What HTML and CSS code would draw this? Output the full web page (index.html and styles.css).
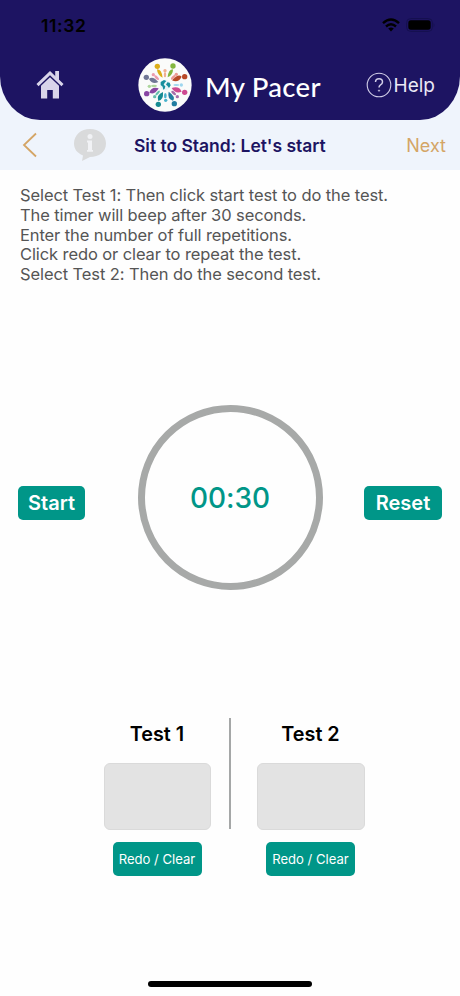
FILE: index.html
```html
<!DOCTYPE html>
<html lang="en">
<head>
<meta charset="utf-8">
<title>My Pacer</title>
<link rel="stylesheet" href="styles.css">
</head>
<body>
<div class="top">
  <header class="header">
    <div class="status">
      <span class="clock">11:32</span>
      <span class="indicators">
        <svg class="wifi" width="18" height="14" viewBox="0 0 18 14"><g fill="none" stroke="#000" stroke-width="2.4"><path d="M1 5.2Q9-2.2 17 5.2"/><path d="M4 8.5Q9 4 14 8.5"/></g><path d="M6.2 10.6Q9 8.4 11.8 10.6L9 13.5Z"/></svg>
        <svg class="battery" width="29" height="14" viewBox="0 0 29 14"><rect x=".6" y=".6" width="25.8" height="12.8" rx="4" fill="none" stroke="#15104f"/><rect x="2.3" y="2.3" width="22.4" height="9.4" rx="2.6"/><path d="M27.6 4.7q1.6 2.3 0 4.6z" fill="#15104f"/></svg>
      </span>
    </div>
    <div class="brandbar">
      <svg class="home" width="28" height="29" viewBox="0 0 28 29"><path d="M1.5 15.2L14 3.2L26.5 15.2" fill="none" stroke="#d9d5ea" stroke-width="3"/><path d="M19.2 1H23V12L19.2 8.4Z" fill="#d9d5ea"/><path d="M5 15.7L14 7.3L23 15.7V28.6H16.8V20H11.2V28.6H5Z" fill="#d9d5ea"/></svg>
      <svg class="logo" width="54" height="54" viewBox="-81 -81 162 162">
        <circle r="80" fill="#fafbfa"/>
        <g fill="#dcae18"><circle cx="-23" cy="-56" r="8"/><path d="M-24-47Q-10-47-7-22Q-23-29-24-47Z"/></g>
        <g fill="#83b63f"><circle cx="24" cy="-57" r="8"/><path d="M24-47Q10-47 8-23Q24-29 24-47Z"/></g>
        <g fill="#b84927"><circle cx="59" cy="-25" r="8"/><path d="M50-25Q40-36 21-14Q40-5 50-25Z"/></g>
        <g fill="#ce4a91"><circle cx="59" cy="22" r="8"/><path d="M50 20Q43 2 20 9Q31 28 50 20Z"/></g>
        <g fill="#217da0"><circle cx="28" cy="56" r="8"/><path d="M24 47Q33 35 11 20Q6 42 24 47Z"/></g>
        <g fill="#168b92"><circle cx="-20" cy="58" r="8"/><path d="M-20 48Q-4 45-6 21Q-27 30-20 48Z"/></g>
        <g fill="#8947a3"><circle cx="-55" cy="26" r="8"/><path d="M-47 23Q-41 4-19 10Q-30 31-47 23Z"/></g>
        <g fill="#707795"><circle cx="-56" cy="-23" r="8"/><path d="M-48-18Q-37-29-20-9Q-38 0-48-18Z"/></g>
        <g fill="#ec9cae"><circle cx="-35" cy="-31" r="5"/><ellipse cx="-25" cy="-22" rx="9" ry="4" transform="rotate(43 -25 -22)"/></g>
        <g fill="#f0af91"><circle cy="-43" r="5"/><ellipse cy="-31" rx="3.5" ry="8"/></g>
        <g fill="#ec9993"><circle cx="34" cy="-32" r="5"/><ellipse cx="25" cy="-23" rx="9" ry="4" transform="rotate(-43 25 -23)"/></g>
        <g fill="#9ed6ef"><circle cx="49" r="5"/><ellipse cx="34" rx="9" ry="3"/></g>
        <g fill="#a56da9"><circle cx="37" cy="35" r="5"/><ellipse cx="26" cy="24" rx="9" ry="4" transform="rotate(43 26 24)"/></g>
        <g fill="#48b2cc"><circle cx="2" cy="46" r="5"/><ellipse cx="1" cy="32" rx="4" ry="8"/></g>
        <g fill="#65bdab"><circle cx="-31" cy="35" r="5"/><ellipse cx="-22" cy="24" rx="9" ry="3.5" transform="rotate(-47 -22 24)"/></g>
        <g fill="#add69d"><circle cx="-47" cy="4" r="5"/><ellipse cx="-33" cy="3" rx="9" ry="3.5"/></g>
        <circle r="16" fill="#e7f5f8"/>
        <path d="M-13-9L-3-15L4-12L-1-7L-4-1L1 4L-1 11L-5 14L-7 5L-13 0ZM7-8L14-7L17 1L12 9L7 2L3-1Z" fill="#168f9e"/>
      </svg>
      <span class="brand">My Pacer</span>
      <span class="help"><svg width="26" height="26" viewBox="0 0 26 26" fill="none" stroke="#d1cee7"><circle cx="13" cy="13" r="11.8" stroke-width="1.1"/><path d="M9.5 10Q9.6 6.8 13 6.8Q16.6 6.8 16.5 9.9Q16.5 11.5 14.5 12.8Q13 13.8 13 15.6" stroke-width="1.5"/><circle cx="13" cy="18.6" r=".7" fill="#d1cee7" stroke-width=".6"/></svg><span>Help</span></span>
    </div>
  </header>
  <nav class="nav">
    <svg class="back" width="16" height="26" viewBox="0 0 16 26"><path d="M14 1.5L2 13L14 24.5" fill="none" stroke="#d4a566" stroke-width="1.8"/></svg>
    <svg class="info" width="34" height="34" viewBox="0 0 34 34"><path d="M17 1C26 1 33 7 33 15.5S26 29 17 29L9 33L10 27.5C4 25 1 21 1 15.5C1 7 8 1 17 1Z" fill="#d9dadb"/><g fill="#f1f2f5"><circle cx="17" cy="8.5" r="2.5"/><path d="M14 12.5H19V22H20V23.8H14V22H15V14.5H14Z"/></g></svg>
    <h1 class="title">Sit to Stand: Let's start</h1>
    <span class="next">Next</span>
  </nav>
</div>
<main>
  <p class="steps">Select Test 1: Then click start test to do the test.<br>The timer will beep after 30 seconds.<br>Enter the number of full repetitions.<br>Click redo or clear to repeat the test.<br>Select Test 2: Then do the second test.</p>
  <section class="timer">
    <button class="btn start">Start</button>
    <div class="dial"><span>00:30</span></div>
    <button class="btn reset">Reset</button>
  </section>
  <section class="tests">
    <div class="test first"><h2>Test 1</h2><div class="field"></div><button class="redo">Redo / Clear</button></div>
    <div class="divider"></div>
    <div class="test second"><h2>Test 2</h2><div class="field"></div><button class="redo">Redo / Clear</button></div>
  </section>
</main>
<div class="homebar"></div>
</body>
</html>
```
FILE: styles.css
```css
* { box-sizing: border-box; }
body { margin: 0; width: 460px; height: 996px; display: flex; flex-direction: column; align-items: center; background: #fefefe; font-family: Inter, "Liberation Sans", sans-serif; overflow: hidden; }
h1, h2, p { margin: 0; }
button { border: 0; padding: 0; background: #009688; color: #fff; font-family: inherit; white-space: nowrap; }
svg { display: block; flex: none; }
main { width: 460px; }
.top { width: 460px; height: 170px; background: #eff4fc; }
.header { height: 120px; background: #1d1462; border-radius: 0 0 40px 40px / 0 0 44px 44px; }
.status { height: 50px; padding: 0 18px 0 41px; display: flex; justify-content: space-between; align-items: center; }
.clock { font-size: 17.5px; font-weight: 600; letter-spacing: 0.6px; color: #000; }
.indicators { display: flex; align-items: center; gap: 6px; margin-right: 7px; }
.brandbar { height: 70px; padding: 0 25px 0 36px; display: flex; align-items: center; }
.home { margin-bottom: 1px; }
.logo { margin-left: 74px; }
.brand { width: 148px; margin-left: 13px; margin-top: 2px; font-family: Lato, sans-serif; font-size: 27.5px; font-weight: 500; letter-spacing: 0.3px; color: #fff; white-space: nowrap; }
.help { display: flex; align-items: center; gap: 2px; margin-left: 13px; color: #ebe9f5; font-size: 19px; }
.nav { height: 50px; padding: 0 14px 0 22px; display: flex; align-items: center; }
.info { margin-left: 35px; margin-bottom: 1px; }
.title { width: 273px; margin-left: 27px; color: #1d1462; font-size: 17.5px; font-weight: 600; letter-spacing: -0.03px; white-space: nowrap; }
.next { color: #d4a566; font-size: 18px; }
.steps { height: 235px; padding: 16px 20px 0; font-size: 16.5px; line-height: 19.8px; letter-spacing: -0.1px; color: #555; white-space: nowrap; }
.timer { height: 185px; padding: 0 18px; display: flex; align-items: center; justify-content: space-between; }
.btn { height: 34px; margin-top: 10px; border-radius: 5px; font-size: 20px; font-weight: 600; }
.start { width: 67px; }
.reset { width: 78px; }
.dial { width: 185px; height: 185px; margin-left: 11px; border: 7px solid #a7a9a8; border-radius: 50%; display: flex; align-items: center; justify-content: center; color: #009688; font-size: 28px; font-weight: 500; letter-spacing: -0.1px; }
.tests { margin-top: 128px; padding-left: 8px; display: flex; justify-content: center; }
.test { display: flex; flex-direction: column; align-items: center; }
.test h2 { height: 45px; padding-top: 4px; font-size: 19.8px; line-height: 24px; font-weight: 600; color: #000; }
.field { width: 107px; height: 67px; border: 1px solid #dadada; border-radius: 6px; background: #e3e3e3; }
.second .field { width: 108px; }
.divider { width: 2px; height: 111px; margin: 0 26px 0 18px; background: #a5a7a7; }
.redo { width: 89px; height: 34px; margin-top: 12px; border-radius: 5px; font-size: 13.1px; }
.homebar { width: 164px; height: 6px; margin-top: auto; margin-bottom: 9px; border-radius: 3px; background: #000; flex: none; }
```
